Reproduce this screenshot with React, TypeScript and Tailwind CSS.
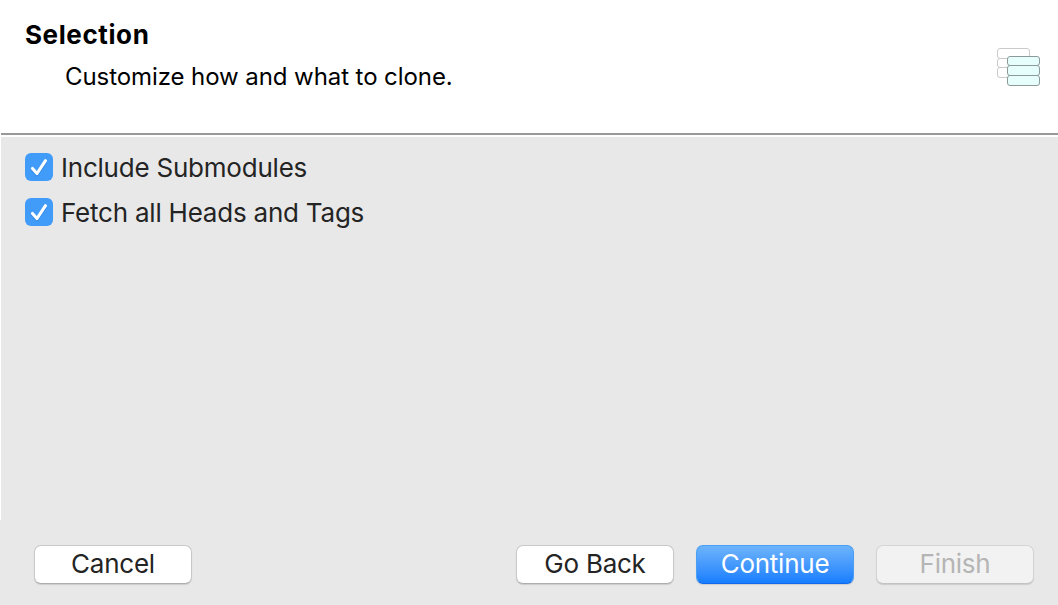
import React, { useState } from "react";

function LayersIcon() {
  return (
    <svg width="46" height="42" viewBox="0 0 46 42" fill="none" className="shrink-0">
      <g fill="#ffffff" stroke="#cacaca">
        <rect x="2.5" y="3.5" width="32" height="10" rx="2.5" />
        <rect x="2.5" y="13.5" width="32" height="9" rx="2.5" />
        <rect x="2.5" y="22.5" width="32" height="10" rx="2.5" />
      </g>
      <g fill="#e6fffd" stroke="#8c9a9a">
        <rect x="12.5" y="11.5" width="32" height="9" rx="2.5" />
        <rect x="12.5" y="20.5" width="32" height="10" rx="2.5" />
        <rect x="12.5" y="30.5" width="32" height="10" rx="2.5" />
      </g>
    </svg>
  );
}

function CheckRow({ label }: { label: string }) {
  const [checked, setChecked] = useState(true);
  return (
    <label className="flex h-7 items-center">
      <input
        type="checkbox"
        className="sr-only"
        checked={checked}
        onChange={() => setChecked(!checked)}
      />
      <span className="h-7 w-7 shrink-0 rounded-md bg-[#419bf9]">
        {checked && (
          <svg width="28" height="28" viewBox="0 0 28 28" fill="none">
            <path d="M7.5 16.3 12 21.3 20.5 8.5" transform="translate(0 .8)" stroke="#2f7fda" strokeWidth="3" strokeLinecap="round" strokeLinejoin="round" opacity=".5" />
            <path d="M7.5 15.5 12 20.5 20.5 7.7" stroke="#fff" strokeWidth="3.1" strokeLinecap="round" strokeLinejoin="round" />
          </svg>
        )}
      </span>
      <span className="ml-2 whitespace-nowrap pt-0.5 text-[26px] leading-7 tracking-[-0.22px] text-[#242424]">{label}</span>
    </label>
  );
}

const buttonBase =
  "flex h-[39px] w-[158px] shrink-0 items-center justify-center rounded-[7px] border pb-0.5 text-[26px] leading-none tracking-[-0.25px] whitespace-nowrap shadow-[0_1px_1px_rgba(0,0,0,0.12)]";

export default function App() {
  return (
    <div className="flex h-[605px] w-[1058px] flex-col overflow-hidden bg-[#e8e8e8] font-['Inter',sans-serif]">
      <header className="flex h-[133px] shrink-0 justify-between bg-white pl-[25px] pr-[17px] text-black">
        <div className="pt-5">
          <h1 className="text-[26px] font-bold leading-[30px] tracking-[0.6px]">Selection</h1>
          <p className="mt-3 pl-10 text-[24px] leading-[30px] tracking-[-0.08px] whitespace-nowrap">Customize how and what to clone.</p>
        </div>
        <div className="pt-[45px]">
          <LayersIcon />
        </div>
      </header>
      <main className="flex h-[387px] shrink-0 flex-col border-l border-white">
        <div className="h-1 shrink-0 border-t-2 border-[#999999] bg-white" />
        <div className="flex flex-col gap-[17px] pl-6 pt-4">
          <CheckRow label="Include Submodules" />
          <CheckRow label="Fetch all Heads and Tags" />
        </div>
      </main>
      <footer className="flex flex-1 items-start justify-between pl-[34px] pr-6 pt-[25px]">
        <button className={`${buttonBase} border-[#c8c8c8] border-b-[#adadad] bg-white text-[#242424]`}>Cancel</button>
        <div className="flex gap-[22px]">
          <button className={`${buttonBase} border-[#c8c8c8] border-b-[#adadad] bg-white text-[#242424]`}>Go Back</button>
          <button className={`${buttonBase} border-[#4a9ff5] border-b-[#1268ea] bg-linear-to-b from-[#6cb3fa] to-[#147efe] text-white`}>Continue</button>
          <button disabled className={`${buttonBase} border-[#d4d4d4] border-b-[#c2c2c2] bg-[#f2f2f2] text-[#b5b5b5]`}>Finish</button>
        </div>
      </footer>
    </div>
  );
}
